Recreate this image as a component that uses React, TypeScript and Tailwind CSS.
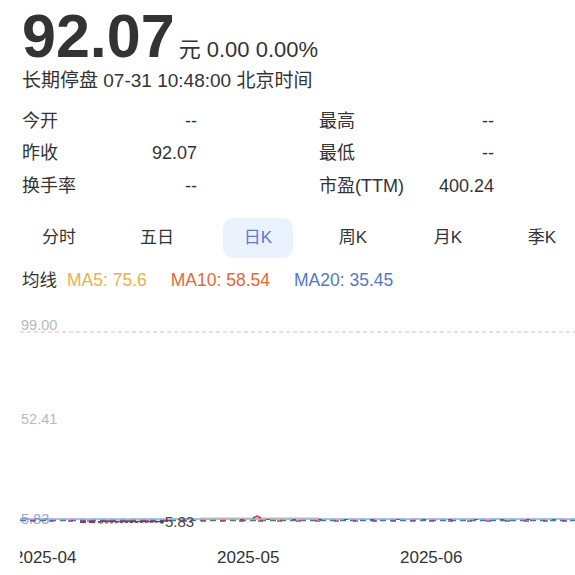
import React from 'react';

const font = { fontFamily: '"Liberation Sans", "Noto Sans CJK SC", sans-serif' };

const stats: [string, string, string, string][] = [
  ['今开', '--', '最高', '--'],
  ['昨收', '92.07', '最低', '--'],
  ['换手率', '--', '市盈(TTM)', '400.24'],
];

const tabs = [
  { label: '分时', cls: 'ml-[24px]' },
  { label: '五日', cls: 'ml-[28px]' },
  { label: '日K', cls: 'ml-[31px]', active: true },
  { label: '周K', cls: 'ml-[25px]' },
  { label: '月K', cls: 'ml-[25px]' },
  { label: '季K', cls: 'ml-[24px]' },
];

function Chart() {
  return (
    <svg width="575" height="282" viewBox="0 0 575 282" className="block">
      <defs>
        <clipPath id="plot">
          <rect x="20" y="0" width="555" height="282" />
        </clipPath>
      </defs>
      <g fontFamily='"Liberation Sans", sans-serif' clipPath="url(#plot)">
        <text x="21" y="37" fontSize="14.5" fill="#bababa">99.00</text>
        <line x1="20" y1="39" x2="575" y2="39" stroke="#e8b9b2" strokeWidth="1" strokeDasharray="4 3" />
        <text x="21" y="131" fontSize="14.5" fill="#bababa">52.41</text>
        <text x="21" y="231" fontSize="14.5" fill="#9aa6c4">5.83</text>

        {/* MA / price lines */}
        <line x1="20" y1="226" x2="575" y2="226" stroke="#5b80c6" strokeWidth="1.2" />
        <line x1="20" y1="227.5" x2="575" y2="227.5" stroke="#3d7f8c" strokeWidth="1.4" strokeDasharray="6 4" />
        <line x1="30" y1="228" x2="575" y2="228" stroke="#a63f92" strokeWidth="1.4" strokeDasharray="5 14" />
        <line x1="240" y1="226.5" x2="575" y2="226.5" stroke="#b33a5a" strokeWidth="1.2" strokeDasharray="4 22" />
        <path d="M80 229 L100 229" stroke="#b0302f" strokeWidth="2.2" strokeDasharray="6 3" />
        <path d="M100 228.5 L162 228.5" stroke="#6b4a44" strokeWidth="1.6" />
        <path d="M100 230 L162 229" stroke="#8c3a48" strokeWidth="1" strokeDasharray="3 2" />
        <path d="M200 225 L320 225" stroke="#d9a07a" strokeWidth="0.8" />
        <path d="M253 225 L257 223 L261 225" stroke="#c0392b" strokeWidth="1.4" fill="none" />
        <circle cx="162" cy="229" r="1.8" fill="#444" />
        <text x="165" y="234" fontSize="15" fill="#444">5.83</text>

        <text x="14" y="270" fontSize="17" fill="#333">2025-04</text>
        <text x="217" y="270" fontSize="17" fill="#333">2025-05</text>
        <text x="400" y="270" fontSize="17" fill="#333">2025-06</text>
      </g>
    </svg>
  );
}

export default function App() {
  return (
    <div className="w-[575px] h-[575px] overflow-hidden bg-white text-[#333]" style={font}>
      <div className="px-[22px] pt-[6px]">
        <div className="flex items-baseline h-[60px]">
          <span className="text-[61px] font-bold leading-none text-[#333]">92.07</span>
          <span className="ml-[4px] text-[22px] leading-none">元 0.00 0.00%</span>
        </div>
        <div className="mt-[2px] text-[19px] leading-[26px]">长期停盘 07-31 10:48:00 北京时间</div>

        <div className="mt-[11px] grid grid-cols-[297px_1fr]">
          {stats.map(([l1, v1, l2, v2]) => (
            <React.Fragment key={l1}>
              <div className="flex w-[175px] justify-between h-[32.5px] items-center text-[18px]">
                <span>{l1}</span>
                <span>{v1}</span>
              </div>
              <div className="flex w-[175px] justify-between h-[32.5px] items-center text-[18px]">
                <span>{l2}</span>
                <span>{v2}</span>
              </div>
            </React.Fragment>
          ))}
        </div>
      </div>

      <div className="mt-[15px] flex">
        {tabs.map((t) => (
          <div
            key={t.label}
            className={`${t.cls} shrink-0 w-[70px] h-[40px] rounded-[10px] flex items-center justify-center text-[17px] ${
              t.active ? 'bg-[#eaf2fe] text-[#5a7bd1]' : 'text-[#333]'
            }`}
          >
            {t.label}
          </div>
        ))}
      </div>

      <div className="mt-[11px] px-[22px] flex items-center h-[24px] text-[17.5px]">
        <span>均线</span>
        <span className="ml-[10px] text-[#e9b24c]">MA5: 75.6</span>
        <span className="ml-[24px] text-[#e06a32]">MA10: 58.54</span>
        <span className="ml-[24px] text-[#5677c4]">MA20: 35.45</span>
      </div>

      <Chart />
    </div>
  );
}
